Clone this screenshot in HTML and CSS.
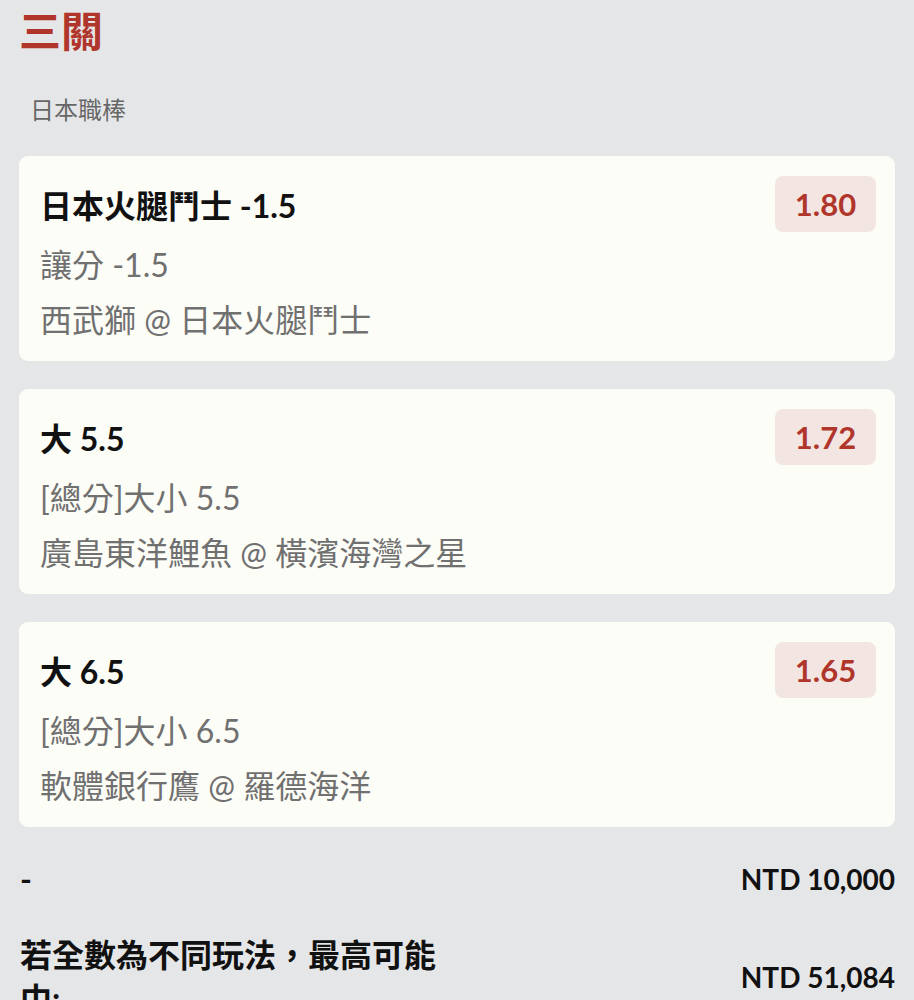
FILE: index.html
```html
<!DOCTYPE html>
<html>
  <head>
    <meta charset="utf-8">
    <link rel="stylesheet" href="styles.css">
  </head>
  <body>
    <main class="slip">
      <h1 class="slip-title">三關</h1>
      <div class="league">日本職棒</div>
      <section class="bets">
        <div class="bet">
          <div class="bet-head">
            <div class="pick">日本火腿鬥士 -1.5</div>
            <div class="odds">1.80</div>
          </div>
          <div class="market">讓分 -1.5</div>
          <div class="match">西武獅 @ 日本火腿鬥士</div>
        </div>
        <div class="bet">
          <div class="bet-head">
            <div class="pick">大 5.5</div>
            <div class="odds">1.72</div>
          </div>
          <div class="market">[總分]大小 5.5</div>
          <div class="match">廣島東洋鯉魚 @ 橫濱海灣之星</div>
        </div>
        <div class="bet">
          <div class="bet-head">
            <div class="pick">大 6.5</div>
            <div class="odds">1.65</div>
          </div>
          <div class="market">[總分]大小 6.5</div>
          <div class="match">軟體銀行鷹 @ 羅德海洋</div>
        </div>
      </section>
      <div class="summary">
        <div class="row">
          <div class="label">-</div>
          <div class="amount">NTD 10,000</div>
        </div>
        <div class="row">
          <div class="label">若全數為不同玩法，最高可能中:</div>
          <div class="amount">NTD 51,084</div>
        </div>
      </div>
    </main>
  </body>
</html>
```

FILE: styles.css
```css
* {
  margin: 0;
  padding: 0;
  box-sizing: border-box;
}
body {
  background-color: #e5e6e8;
  font-family: "Lato", "Noto Sans CJK TC", sans-serif;
  color: #111;
}
.slip {
  padding: 0 19px;
}
.slip-title {
  color: #b0352b;
  font-size: 42px;
  font-weight: 700;
  line-height: 62px;
}
.league {
  color: #666;
  font-size: 24px;
  line-height: 40px;
  margin: 28px 0 0 11px;
}
.bets {
  display: flex;
  flex-direction: column;
  gap: 28px;
  margin-top: 26px;
}
.bet {
  background-color: #fdfdf7;
  border-radius: 9px;
  padding: 20px 19px 14px 21px;
}
.bet-head {
  display: flex;
  justify-content: space-between;
  align-items: center;
  height: 56px;
}
.pick {
  font-size: 32px;
  font-weight: 700;
}
.odds {
  background-color: #f3e6e2;
  color: #b0352b;
  font-size: 31px;
  font-weight: 700;
  width: 101px;
  height: 56px;
  line-height: 56px;
  text-align: center;
  border-radius: 8px;
}
.market,
.match {
  color: #707070;
  font-size: 32px;
  line-height: 55px;
}
.market {
  margin-top: 5px;
}
.summary {
  margin-top: 30px;
  display: flex;
  flex-direction: column;
  gap: 32px;
}
.row {
  display: flex;
  justify-content: space-between;
  align-items: center;
  font-size: 32px;
  font-weight: 700;
  line-height: 44px;
}
.label {
  width: 440px;
  padding-left: 1px;
}
.amount {
  font-size: 28px;
}
```
